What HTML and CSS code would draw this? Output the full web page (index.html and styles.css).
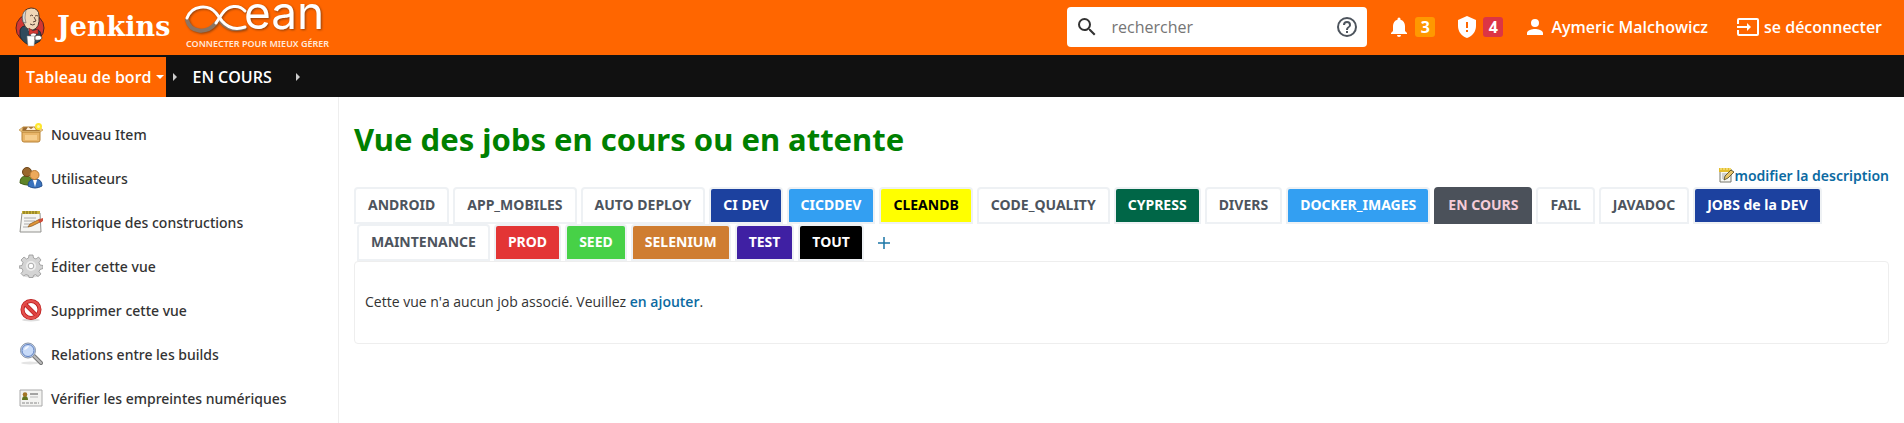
FILE: index.html
```html
<!DOCTYPE html>
<html lang="fr">
<head>
<meta charset="utf-8">
<title>EN COURS [Jenkins]</title>
<link rel="stylesheet" href="styles.css">
</head>
<body>
<header class="header">
  <a class="brand" href="#">
    <svg class="butler" viewBox="0 0 30 40" aria-hidden="true">
      <ellipse cx="15" cy="21" rx="14" ry="14" fill="#d33833" stroke="#5a2320"/>
      <path d="M5 23q2-5 7-4l8 3q6 1 6 6l-1 6q-5 4-11 4-7-3-9-9z" fill="#2f4a5c" stroke="#16232b" stroke-width=".8"/>
      <path d="M8 9q0-7 8-8 8 0 8 8 1 12-6 14-7 0-9-6-3-4-1-8z" fill="#f0d6b7" stroke="#3b2a22" stroke-width=".9"/>
      <path d="M8 15q-2-9 3-12-1 6-1 8l1 5z" fill="#d8d8d6" stroke="#6a625c" stroke-width=".6"/>
      <path d="M15 9q2-2 3 0M20 9q2-1 3 0M19 10l2 4-3 1M15 17q3 2 5 0" fill="none" stroke="#4a3228" stroke-width=".9"/>
      <path d="M13 22l4 3 5-2-3 12z" fill="#fff"/>
      <path d="M14 21l4 3 5-2v5l-5-1-4 2z" fill="#d33833" stroke="#7a1815" stroke-width=".5"/>
      <path d="M12 29h8l-1 10h-6z" fill="#fff" stroke="#888" stroke-width=".5"/>
      <path d="M20 29q6-2 7 2-1 3-7 2z" fill="#fff" stroke="#3b2a22" stroke-width=".7"/>
    </svg>
    <span class="brand-name">Jenkins</span>
  </a>
  <svg class="ocean" viewBox="0 0 152 46" role="img" aria-label="Ocean, connecter pour mieux gérer">
    <g class="ocean-mark" fill="none" stroke-linecap="round">
      <path d="M2 16C5 28 21 31 31 19" stroke="#8d7462" stroke-width="4"/>
      <path d="M35 17C41 25 50 27 60 24" stroke="#8d7462" stroke-width="3"/>
      <path d="M2 14C7 1 23 0 31 9L37 17C43 24 51 26 60 23" stroke="#fff" stroke-width="3"/>
      <path d="M31 19L37 10C43 1 54 0 60 7" stroke="#fff" stroke-width="3"/>
      <text class="ocean-word" x="59" y="25">ean</text>
    </g>
    <text class="ocean-tag" x="1" y="43">CONNECTER POUR MIEUX GÉRER</text>
  </svg>
  <form class="search" role="search">
    <svg class="search-icon" viewBox="0 0 24 24" aria-hidden="true"><path d="M15.500 14h-.79l-.28-.27A6.470 6.470 0 0 0 16 9.500 6.500 6.500 0 1 0 9.500 16c1.610 0 3.090-.59 4.230-1.570l.27.28v.79l5 4.990L20.490 19l-4.990-5zm-6 0a4.500 4.500 0 1 1 0-9 4.500 4.500 0 0 1 0 9z"/></svg>
    <input class="search-input" type="search" placeholder="rechercher" aria-label="rechercher">
    <a class="help" href="#" aria-label="Aide"><svg viewBox="0 0 24 24"><path d="M11 18h2v-2h-2v2zm1-16a10 10 0 1 0 0 20 10 10 0 0 0 0-20zm0 18a8 8 0 1 1 0-16 8 8 0 0 1 0 16zm0-14a4 4 0 0 0-4 4h2a2 2 0 1 1 4 0c0 2-3 1.750-3 5h2c0-2.250 3-2.500 3-5a4 4 0 0 0-4-4z"/></svg></a>
  </form>
  <nav class="account" aria-label="Compte">
    <button class="alert" type="button" aria-label="3 notifications">
      <svg viewBox="0 0 24 24"><path d="M12 22a2 2 0 0 0 2-2h-4a2 2 0 0 0 2 2zm6-6v-5c0-3.070-1.640-5.640-4.500-6.320V4a1.500 1.500 0 0 0-3 0v.68C7.630 5.360 6 7.920 6 11v5l-2 2v1h16v-1z"/></svg>
      <span class="badge badge-amber">3</span>
    </button>
    <button class="alert" type="button" aria-label="4 alertes de sécurité">
      <svg viewBox="0 0 24 24"><path fill-rule="evenodd" d="M12 1 3 5v6c0 5.550 3.840 10.740 9 12 5.160-1.260 9-6.450 9-12V5zM11 7h2v6h-2zm0 8h2v2h-2z"/></svg>
      <span class="badge badge-red">4</span>
    </button>
    <a class="user" href="#">
      <svg viewBox="0 0 24 24"><path d="M12 12a4 4 0 1 0 0-8 4 4 0 0 0 0 8zm0 2c-2.670 0-8 1.340-8 4v2h16v-2c0-2.660-5.330-4-8-4z"/></svg>
      <span>Aymeric Malchowicz</span>
    </a>
    <a class="logout" href="#">
      <svg viewBox="0 0 24 24"><path d="M21 3H3a2 2 0 0 0-2 2v4h2V5h18v14H3v-4H1v4a2 2 0 0 0 2 2h18a2 2 0 0 0 2-2V5a2 2 0 0 0-2-2zM11 16l4-4-4-4v3H1v2h10z"/></svg>
      <span>se déconnecter</span>
    </a>
  </nav>
</header>

<nav class="crumbs" aria-label="Fil d'Ariane">
  <a class="crumb crumb-home" href="#">Tableau de bord<span class="caret-down"></span></a>
  <span class="caret-right"></span>
  <a class="crumb" href="#">EN COURS</a>
  <span class="caret-right caret-last"></span>
</nav>

<div class="page">
  <nav class="tasks" aria-label="Tâches">
    <a class="task" href="#">
      <svg viewBox="0 0 24 24"><path d="M3 9h18v9q0 2-2 2H5q-2 0-2-2z" fill="#e9b66a" stroke="#b98336"/><path d="M4 5h15l2 5H3z" fill="#9a6a33" stroke="#b98336"/><path d="m7 8 2-3 3 2 3-2 2 3z" fill="#fff0dc"/><path d="M4 5 0 8l3 2h18l3-2-4-3 1 4H3z" fill="#f2cf94" stroke="#c29349" stroke-width=".7"/><path d="M6 13h12v5H6z" fill="#f6cd8c"/><circle cx="19.500" cy="4.500" r="3.500" fill="#ffe72e"/><circle cx="19.500" cy="4.500" r="1.500" fill="#fff9a6"/></svg>
      Nouveau Item</a>
    <a class="task" href="#">
      <svg viewBox="0 0 24 24"><path d="M1 17q0-7 6-7t7 7q-5 4-13 0z" fill="#5f8428" stroke="#3f5e13"/><circle cx="8" cy="6" r="4.500" fill="#99672d" stroke="#6e4519"/><path d="M9 20q0-7 7-7t7 7q-7 4-14 0z" fill="#3a73bd" stroke="#244f8d"/><path d="m14 14 2 7 2-7z" fill="#fff"/><circle cx="15.500" cy="9" r="4.500" fill="#eda95b" stroke="#b97a34"/></svg>
      Utilisateurs</a>
    <a class="task" href="#">
      <svg viewBox="0 0 24 24"><path d="M3 3h18l1 19H1z" fill="#f5f5f3" stroke="#92928e"/><path d="M3 1h18v3H3z" fill="#c8b23b"/><path d="M5 1v3M8 1v3M11 1v3M14 1v3M17 1v3" stroke="#776719"/><path d="M5 8h12M5 11h11M5 14h6M4 17h5" stroke="#aaa"/><path d="m9 17 2-3 10-5 2 2-10 5z" fill="#e29537" stroke="#8a5a21" stroke-width=".8"/><path d="m19 10 2-1 3-1v3l-3 2z" fill="#cf4e3a"/></svg>
      Historique des constructions</a>
    <a class="task" href="#">
      <svg viewBox="0 0 24 24"><ellipse cx="12" cy="22" rx="8" ry="1.500" fill="#ddd"/><path d="m10 1 4 0 .5 3 2.500 1 2.500-2 2.500 3-2 2.500 1 2.500 3 .5v3l-3 1-1 2 2 2.500-3 2.500-2.500-2-2 1-.5 2h-4l-.5-2-2.500-1-2.500 1.500-2.500-2.500 2-2.500-1-2.500-3-.5V12l3-.5 1-3L2 6l3-3 2.500 2 2-1z" fill="#d4d4d4" stroke="#969696" stroke-width=".8"/><circle cx="12" cy="12" r="5" fill="#eee"/><circle cx="12" cy="12" r="2.800" fill="#fff" stroke="#aaa"/></svg>
      Éditer cette vue</a>
    <a class="task" href="#">
      <svg viewBox="0 0 24 24"><ellipse cx="12" cy="22" rx="9" ry="1.500" fill="#ddd"/><circle cx="12" cy="11.500" r="8.500" fill="#fff" stroke="#b91b1b" stroke-width="4"/><path d="m6 6 12 12" stroke="#b91b1b" stroke-width="4"/><circle cx="12" cy="11.500" r="8.500" fill="none" stroke="#e4504d" stroke-width="2.500"/><path d="m6 6 12 12" stroke="#df4341" stroke-width="2.500"/></svg>
      Supprimer cette vue</a>
    <a class="task" href="#">
      <svg viewBox="0 0 24 24"><ellipse cx="11" cy="21" rx="9" ry="1.500" fill="#e4e4e4"/><path d="m15 14 7 7" stroke="#777" stroke-width="4" stroke-linecap="round"/><path d="m15 14 7 7" stroke="#bbb" stroke-width="2" stroke-linecap="round"/><circle cx="9" cy="8.500" r="7.500" fill="#bed3f6" stroke="#8b95a5"/><circle cx="9" cy="8.500" r="6" fill="#c7daf8" stroke="#5f80bf"/><path d="M5 8q1-4 5-4-1 3-5 4z" fill="#f4f8ff"/></svg>
      Relations entre les builds</a>
    <a class="task" href="#">
      <svg viewBox="0 0 24 24"><path d="M1 4h22v16H1z" fill="#f3f3f1" stroke="#aaa"/><path d="M3 14q0-4 3-4t3 4z" fill="#61751f"/><circle cx="6" cy="8.500" r="2.300" fill="#a37525"/><path d="M11 8h8" stroke="#555"/><path d="M11 11h8" stroke="#bbb"/><path d="M3 17h17" stroke="#888" stroke-dasharray="3 1"/></svg>
      Vérifier les empreintes numériques</a>
  </nav>

  <main class="main">
    <h1 class="title">Vue des jobs en cours ou en attente</h1>
    <a class="edit" href="#">
      <svg viewBox="0 0 16 16"><path d="M2 2h11v13H2z" fill="#f7f7f2" stroke="#77776c"/><path d="M1 1h12v4H1z" fill="#e3bd2e"/><path d="M3 1v2M6 1v2M9 1v2M12 1v2" stroke="#fff3a8"/><path d="M4 7h6M4 9h4M4 11h3" stroke="#aaa"/><path d="m6 13 1-4 6-6 3 2-6 6z" fill="#e8c56a" stroke="#47401f" stroke-width=".8"/></svg>modifier la description</a>
    <div class="tabs">
      <div class="tab-row">
        <a class="tab" href="#">ANDROID</a>
        <a class="tab" href="#">APP_MOBILES</a>
        <a class="tab" href="#">AUTO DEPLOY</a>
        <a class="tab tab-navy" href="#">CI DEV</a>
        <a class="tab tab-sky" href="#">CICDDEV</a>
        <a class="tab tab-yellow" href="#">CLEANDB</a>
        <a class="tab" href="#">CODE_QUALITY</a>
        <a class="tab tab-forest" href="#">CYPRESS</a>
        <a class="tab" href="#">DIVERS</a>
        <a class="tab tab-sky" href="#">DOCKER_IMAGES</a>
        <a class="tab tab-active" href="#" aria-current="page">EN COURS</a>
        <a class="tab" href="#">FAIL</a>
        <a class="tab" href="#">JAVADOC</a>
        <a class="tab tab-navy" href="#">JOBS de la DEV</a>
      </div>
      <div class="tab-row tab-row-next">
        <a class="tab" href="#">MAINTENANCE</a>
        <a class="tab tab-red" href="#">PROD</a>
        <a class="tab tab-green" href="#">SEED</a>
        <a class="tab tab-copper" href="#">SELENIUM</a>
        <a class="tab tab-violet" href="#">TEST</a>
        <a class="tab tab-black" href="#">TOUT</a>
        <a class="add" href="#" aria-label="Nouvelle vue"><svg viewBox="0 0 12 12"><path d="M6 0v12M0 6h12" stroke="#1b76a6" stroke-width="1.500"/></svg></a>
      </div>
    </div>
    <section class="empty">Cette vue n'a aucun job associé. Veuillez <a class="link" href="#">en ajouter</a>.</section>
  </main>
</div>
</body>
</html>
```
FILE: styles.css
```css
* { box-sizing: border-box; }
body {
  margin: 0;
  background: #fff;
  color: #333;
  font-family: "Noto Sans", "Open Sans", sans-serif;
  font-size: 14px;
}
a { color: inherit; text-decoration: none; }
svg { display: block; flex: none; }

.header {
  display: flex;
  align-items: center;
  height: 55px;
  padding: 0 22px 1px 15px;
  background: #ff6600;
  color: #fff;
}
.brand { display: flex; align-items: center; gap: 12px; }
.butler { width: 30px; height: 40px; }
.brand-name { font: bold 27px/40px "DejaVu Serif", serif; }
.ocean { width: 152px; height: 46px; margin-left: 15px; overflow: visible; }
.ocean-mark { filter: drop-shadow(1px 1px 1px rgba(70, 40, 20, .6)); }
.ocean-word { font: 400 46px Inter, sans-serif; fill: #fff; }
.ocean-tag { font: 600 9px "Noto Sans", sans-serif; fill: #ffe9dc; }

.search {
  display: flex;
  align-items: center;
  width: 300px;
  height: 40px;
  margin-left: auto;
  padding: 0 8px;
  border-radius: 4px;
  background: #fff;
}
.search-icon { width: 24px; height: 24px; fill: #333; }
.search-input {
  flex: 1;
  min-width: 0;
  padding: 0 12px;
  border: 0;
  outline: 0;
  background: none;
  font: 16px "Open Sans", sans-serif;
}
.search-input::placeholder { color: #757575; opacity: 1; }
.help svg { width: 24px; height: 24px; fill: #4d545d; }

.account {
  display: flex;
  align-items: center;
  font-family: "Open Sans", sans-serif;
  font-size: 16px;
  font-weight: 600;
}
.alert {
  display: flex;
  align-items: center;
  gap: 4px;
  margin-left: 20px;
  padding: 0;
  border: 0;
  background: none;
  color: #fff;
}
.account svg { width: 24px; height: 24px; fill: #fff; }
.badge {
  width: 20px;
  border-radius: 3px;
  font: bold 16px/20px "Noto Sans", sans-serif;
  text-align: center;
}
.badge-amber { background: #ff9800; }
.badge-red { background: #dc3545; }
.user, .logout { display: flex; align-items: center; gap: 4px; }
.user { margin-left: 20px; }
.logout { margin-left: 28px; }

.crumbs {
  display: flex;
  align-items: center;
  height: 42px;
  padding: 2px 0 0 19px;
  background: #111;
  color: #fff;
  font-family: "Open Sans", sans-serif;
  font-size: 16px;
  font-weight: 600;
}
.crumb { line-height: 40px; }
.crumb-home {
  display: flex;
  align-items: center;
  gap: 4px;
  margin-right: 7px;
  padding: 0 2px 0 7px;
  background: #ff6600;
}
.caret-down { border: 4px solid transparent; border-top-color: #fff; border-bottom: 0; }
.caret-right { margin-right: 16px; border: 4px solid transparent; border-left-color: #ccc; border-right: 0; }
.caret-last { margin-left: 24px; }

.page { display: flex; min-height: calc(100vh - 97px); }
.tasks {
  flex: none;
  width: 339px;
  padding: 15px 19px 0;
  border-right: 1px solid #eee;
}
.task {
  display: flex;
  align-items: center;
  gap: 8px;
  height: 44px;
  font-weight: 500;
}
.task svg { width: 24px; height: 24px; }

.main { flex: 1; min-width: 0; padding: 20px 15px 0 15px; }
.title { margin: 0; color: #008000; font-size: 31px; line-height: 44px; }
.edit {
  display: flex;
  align-items: center;
  justify-content: flex-end;
  height: 26px;
  padding-top: 2px;
  color: #0b6aa2;
  font-weight: 600;
}
.edit svg { width: 16px; height: 16px; }
.tab-row { display: flex; gap: 4px; height: 37px; }
.tab-row-next { padding-left: 3px; }
.tab {
  padding: 0 12px;
  border: 2px solid #eef1f4;
  border-radius: 4px 4px 0 0;
  color: #4d545d;
  font-weight: 700;
  line-height: 32px;
  white-space: nowrap;
}
.tab-navy { background: #1c419f; color: #fff; }
.tab-sky { background: #339ff2; color: #fff; }
.tab-yellow { background: #ff0; color: #000; }
.tab-forest { background: #006647; color: #fff; }
.tab-active { border-color: #4b515a; background: #4b515a; color: #f5ccd8; }
.tab-red { background: #e33535; color: #fff; }
.tab-green { background: #47d147; color: #fff; }
.tab-copper { background: #cf7d31; color: #fff; }
.tab-violet { background: #3f20a3; color: #fff; }
.tab-black { background: #000; color: #fff; }
.add { display: flex; align-items: center; padding: 0 10px; }
.add svg { width: 12px; height: 12px; }
.empty {
  height: 83px;
  padding: 0 10px;
  border: 1px solid #eee;
  border-radius: 4px;
  font-family: "Open Sans", sans-serif;
  line-height: 80px;
}
.link { color: #0b6aa2; font-weight: 600; }
```
